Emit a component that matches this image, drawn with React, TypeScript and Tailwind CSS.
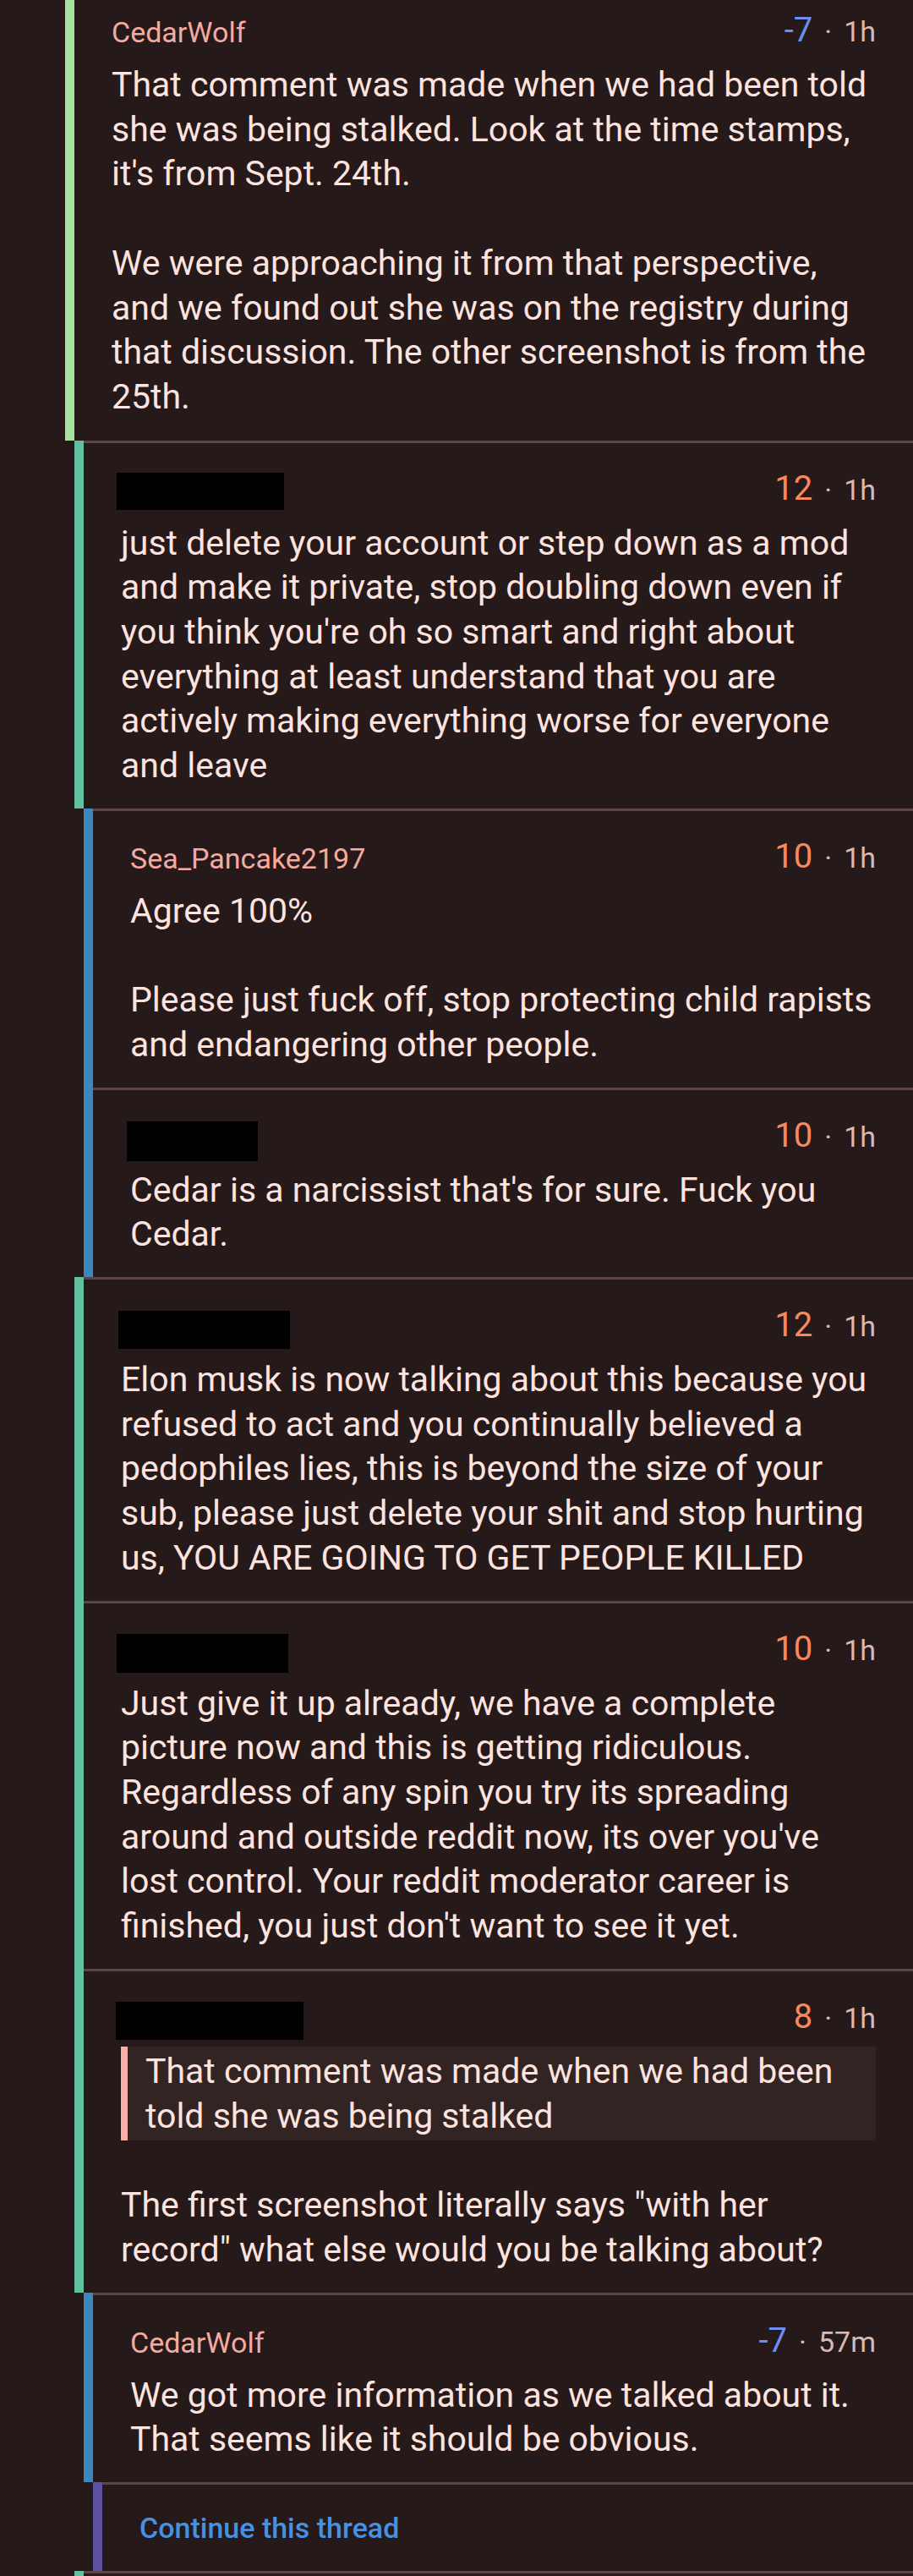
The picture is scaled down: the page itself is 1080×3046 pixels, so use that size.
import React from 'react';

type Depth = 1 | 2 | 3 | 4;

type Row = {
  depth: Depth;
  user?: string;
  box?: string;
  score?: number;
  age?: string;
  quote?: string;
  body?: string;
  link?: string;
  first?: boolean;
};

const indent: Record<Depth, string> = {
  1: 'ml-[77px]',
  2: 'ml-[88px]',
  3: 'ml-[99px]',
  4: 'ml-[110px]',
};

const barColor: Record<Depth, string> = {
  1: 'bg-[#a8e0a0]',
  2: 'bg-[#62c0a0]',
  3: 'bg-[#3a88c0]',
  4: 'bg-[#5c50a0]',
};

const rows: Row[] = [
  {
    depth: 1,
    first: true,
    user: 'CedarWolf',
    score: -7,
    age: '1h',
    body: "That comment was made when we had been told\nshe was being stalked. Look at the time stamps,\nit's from Sept. 24th.\n\nWe were approaching it from that perspective,\nand we found out she was on the registry during\nthat discussion. The other screenshot is from the\n25th.",
  },
  {
    depth: 2,
    box: 'ml-[-5px] mt-[5px] h-[44px] w-[198px]',
    score: 12,
    age: '1h',
    body: "just delete your account or step down as a mod\nand make it private, stop doubling down even if\nyou think you're oh so smart and right about\neverything at least understand that you are\nactively making everything worse for everyone\nand leave",
  },
  {
    depth: 3,
    user: 'Sea_Pancake2197',
    score: 10,
    age: '1h',
    body: 'Agree 100%\n\nPlease just fuck off, stop protecting child rapists\nand endangering other people.',
  },
  {
    depth: 3,
    box: 'ml-[-4px] mt-[7px] h-[47px] w-[155px]',
    score: 10,
    age: '1h',
    body: "Cedar is a narcissist that's for sure. Fuck you\nCedar.",
  },
  {
    depth: 2,
    box: 'ml-[-3px] mt-[7px] h-[45px] w-[203px]',
    score: 12,
    age: '1h',
    body: 'Elon musk is now talking about this because you\nrefused to act and you continually believed a\npedophiles lies, this is beyond the size of your\nsub, please just delete your shit and stop hurting\nus, YOU ARE GOING TO GET PEOPLE KILLED',
  },
  {
    depth: 2,
    box: 'ml-[-5px] mt-[6px] h-[46px] w-[203px]',
    score: 10,
    age: '1h',
    body: "Just give it up already, we have a complete\npicture now and this is getting ridiculous.\nRegardless of any spin you try its spreading\naround and outside reddit now, its over you've\nlost control. Your reddit moderator career is\nfinished, you just don't want to see it yet.",
  },
  {
    depth: 2,
    box: 'ml-[-6px] mt-[6px] h-[45px] w-[222px]',
    score: 8,
    age: '1h',
    quote: 'That comment was made when we had been\ntold she was being stalked',
    body: 'The first screenshot literally says "with her\nrecord" what else would you be talking about?',
  },
  {
    depth: 3,
    user: 'CedarWolf',
    score: -7,
    age: '57m',
    body: 'We got more information as we talked about it.\nThat seems like it should be obvious.',
  },
  { depth: 4, link: 'Continue this thread' },
];

function Comment({ row }: { row: Row }) {
  if (row.link) {
    return (
      <div className={`flex ${indent[row.depth]}`}>
        <div className={`w-[11px] shrink-0 ${barColor[row.depth]}`} />
        <div className="min-w-0 flex-1 border-t-[3px] border-[#5b4446] px-[44px] py-[27px]">
          <span className="text-[34px] font-medium leading-[48px] text-[#4691e1]">{row.link}</span>
        </div>
      </div>
    );
  }

  const negative = (row.score ?? 0) < 0;

  return (
    <div className={`flex ${indent[row.depth]}`}>
      <div className={`w-[11px] shrink-0 ${barColor[row.depth]}`} />
      <div
        className={
          row.first
            ? 'min-w-0 flex-1 px-[44px] pb-[25px] pt-[12px]'
            : 'min-w-0 flex-1 border-t-[3px] border-[#5b4446] px-[44px] pb-[24px] pt-[30px]'
        }
      >
        <div className="flex h-[50px] items-start justify-between">
          {row.user ? (
            <span className="mt-[2px] text-[34px] leading-[48px] text-[#f5aaa1]">{row.user}</span>
          ) : (
            <div className={`shrink-0 bg-black ${row.box}`} />
          )}
          <div className="flex items-baseline leading-[48px]">
            <span className={`text-[40px] ${negative ? 'text-[#6a8ff0]' : 'text-[#f8895a]'}`}>{row.score}</span>
            <span className="px-[14px] text-[34px] text-[#d9b9b4]">·</span>
            <span className="text-[34px] text-[#d9b9b4]">{row.age}</span>
          </div>
        </div>

        <div className="mt-[12px] text-[41px] leading-[52.7px] text-[#fce3df]">
          {row.quote && (
            <div className="-mt-[3px] flex bg-[#332424]">
              <div className="w-[8px] shrink-0 bg-[#f9aeaa]" />
              <p className="whitespace-pre py-[3px] pl-[21px]">{row.quote}</p>
            </div>
          )}
          <p className={`whitespace-pre ${row.quote ? 'mt-[50px]' : ''}`}>{row.body}</p>
        </div>
      </div>
    </div>
  );
}

export default function App() {
  return (
    <div className="min-h-screen overflow-hidden bg-[#261919] font-['Roboto',sans-serif] antialiased">
      {rows.map((row, i) => (
        <Comment key={i} row={row} />
      ))}
      {/* next sibling thread, only its top edge is on screen */}
      <div className={`flex ${indent[2]}`}>
        <div className={`w-[11px] shrink-0 ${barColor[2]}`} />
        <div className="h-[120px] min-w-0 flex-1 border-t-[3px] border-[#5b4446]" />
      </div>
    </div>
  );
}
